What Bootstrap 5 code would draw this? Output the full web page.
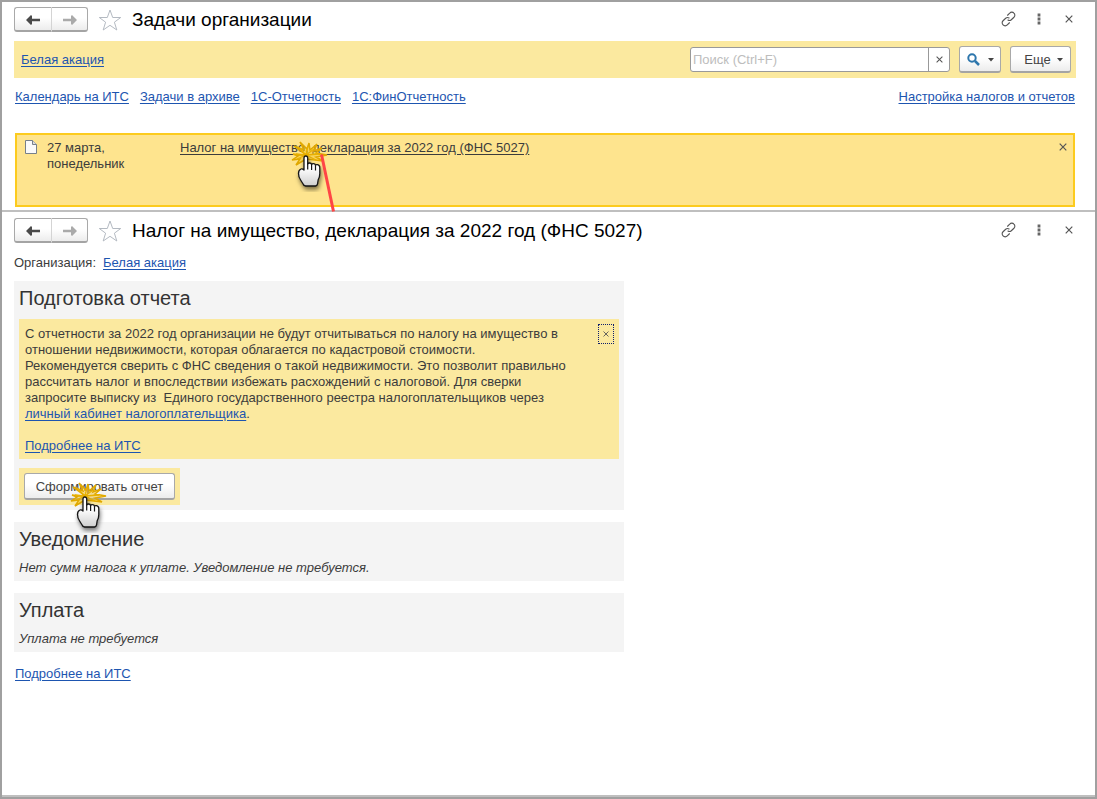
<!DOCTYPE html>
<html lang="ru">
<head>
<meta charset="utf-8">
<meta name="viewport" content="width=device-width, initial-scale=1">
<title>Задачи организации</title>
<link href="https://cdn.jsdelivr.net/npm/bootstrap@5.3.0/dist/css/bootstrap.min.css" rel="stylesheet">
<style>
  body { font: 13px/16px "Liberation Sans", Arial, sans-serif; color: #3c3c3c; background: #fff; }
  a { color: #1d55b0; text-underline-offset: 2px; }
  .window { min-height: 100vh; border: 2px solid #a0a0a0; }
  .pane { padding: 5px 19px 0 12px; }
  .pane-tasks { border-bottom: 2px solid #bfbfbf; padding-bottom: 3px; }
  .pane-report { border-bottom: 2px solid #bfbfbf; padding-top: 6px; }
  .pane-head { height: 25px; }
  .pane-title { font-size: 19px; line-height: 24px; color: #000; margin: 0 0 0 10px; }
  .star { margin-left: 10px; }
  .btn-1c { display: flex; align-items: center; justify-content: center; height: 27px; padding: 1px 0 0; font-size: 13px; line-height: 16px; color: #444;
    background: linear-gradient(#fff 45%, #ececec); border: 1px solid #a9a9a9; border-bottom: 2px solid #a4a4a4; border-radius: 3px; }
  .history .btn-1c { width: 38px; height: 25px; color: #4a4a4a; }
  .history .btn-1c:first-child { border-radius: 3px 0 0 3px; border-right-color: #d4d4d4; }
  .history .btn-1c:last-child { border-radius: 0 3px 3px 0; border-left: 0; width: 36px; color: #aaa; }
  .plain { border: 0; background: none; padding: 0; display: flex; align-items: center; justify-content: center; color: #555; }
  .tools { gap: 15px; margin-bottom: 2px; }
  .tools .plain { width: 15px; height: 16px; }
  .filter { height: 37px; background: #fbe99f; padding: 0 5px 0 7px; margin-top: 9px; }
  .search { width: 260px; height: 25px; margin-right: 9px; border: 1px solid #999; border-radius: 3px; background: #fff; }
  .search input { border: 0; outline: 0; min-width: 0; padding: 0 2px; background: none; }
  .search input::placeholder { color: #bdbdbd; opacity: 1; }
  .search .plain { width: 21px; border-left: 1px solid #999; }
  .btn-find { width: 42px; margin-right: 9px; gap: 8px; }
  .btn-more { width: 61px; gap: 6px; padding-left: 6px; }
  .shortcuts { margin: 11px 1px 0; gap: 11px; }
  .task { margin: 28px 1px 0; height: 74px; background: #fee48e; border: 2px solid #fccb1e; padding: 5px 5px 0 8px; }
  .task-date { width: 143px; padding-left: 10px; }
  .task a { color: #3c3c3c; }
  .task .plain { width: 11px; height: 14px; }
  .org { margin-top: 12px; gap: 7px; }
  .report { max-width: 610px; margin-top: 10px; }
  .block { background: #f4f4f4; padding: 5px; margin-bottom: 12px; }
  .block h2 { font-size: 20px; line-height: 24px; margin: 0; color: #333; }
  .note { background: #fbe99f; padding: 7px 6px 5px; margin: 9px 0; }
  .note p { max-width: 545px; margin: 0; }
  .note .plain { width: 16px; height: 20px; margin: -2px -1px 0 0; border: 1px dotted #10206c; }
  .hint { margin: 9px 0 0; font-style: italic; }
  .more { display: inline-block; margin: 2px 0 0 1px; }
  .accent { background: #fbe99f; padding: 5px; width: 161px; }
  .accent .btn-1c { width: 151px; }
  .pointer { position: absolute; pointer-events: none; z-index: 2; overflow: visible; }
  .pointer-task { left: 110px; top: 0; }
  .pointer-make { left: 50px; top: 13px; }
</style>
</head>
<body>
<svg width="0" height="0" class="position-absolute" aria-hidden="true">
  <defs>
    <linearGradient id="skin" x1="0" y1="0" x2="0" y2="1"><stop offset=".4" stop-color="#fff"/><stop offset="1" stop-color="#cfcfcf"/></linearGradient>
    <filter id="shade" x="-40%" y="-20%" width="190%" height="160%"><feDropShadow dx="1" dy="3" stdDeviation="2" flood-color="#000" flood-opacity=".5"/></filter>
    <symbol id="i-back" viewBox="0 0 14 10"><path d="M0 5l5-5 1 1v2.800h8v2.400H6V9l-1 1z" fill="currentColor"/></symbol>
    <symbol id="i-fwd" viewBox="0 0 14 10"><path d="M14 5L9 0 8 1v2.800H0v2.400h8V9l1 1z" fill="currentColor"/></symbol>
    <symbol id="i-star" viewBox="0 0 24 22"><path d="M12 1l2.700 7.500h8l-6.300 4.700 2.400 7.800L12 16.300 5.200 21l2.400-7.800L1.300 8.500h8z" fill="#fff" stroke="#b4bac2"/></symbol>
    <symbol id="i-link" viewBox="0 0 16 16"><g fill="none" stroke="#555" stroke-width="1.200" stroke-linecap="round"><path d="M7 4l2.300-2.300a3 3 0 0 1 4.500 0 3 3 0 0 1 0 4.400L11 8.800a3 3 0 0 1-3.600.3"/><path d="M9 12l-2.300 2.300a3 3 0 0 1-4.500 0 3 3 0 0 1 0-4.400L5 7.200a3 3 0 0 1 3.600-.3"/></g></symbol>
    <symbol id="i-dots" viewBox="0 0 4 12"><path d="M.6.600h2.800v2.800H.6zM.6 4.600h2.800v2.800H.6zM.6 8.600h2.800v2.800H.6z" fill="#666"/></symbol>
    <symbol id="i-x" viewBox="0 0 8 8"><path d="M.7.7l6.600 6.600M7.300.7L.7 7.300" stroke="currentColor" stroke-width="1.200"/></symbol>
    <symbol id="i-down" viewBox="0 0 6 4"><path d="M0 0h6L3 3.500z" fill="#444"/></symbol>
    <symbol id="i-hand" viewBox="0 -4 42 52">
      <path d="M16 11L4 2l10 4L10-2l7 7 2-6 1 7 7-6-3 7 8-3-6 5 11 2-11 2 7 4-8-1-9-1-10 6 4-6-8 1 6-4-5-2 8 1z" fill="#f5c01c" fill-opacity=".45" stroke="#e0a800" stroke-width="1.500" stroke-linejoin="miter"/>
      <path d="M16 11L8 3M16 11l2-9M16 11l8-6M16 11l14-1M16 11l10 5M16 11L7 15M16 11L6 10" stroke="#e8b000" stroke-width="1.300"/>
      <g filter="url(#shade)"><path d="M14 14q0-2 1.800-2t1.900 2v6q.4-1 2-1 1.600 0 1.900 1.500.5-1 2-.8 1.500.1 1.900 1.600.5-.9 2-.6 2.300.5 2.300 3v6q0 3-1.600 6l-.6 4q-.3 2-2 2.300h-10q-2-.1-2.500-2L10.600 36Q8.500 33 8.500 29.500q0-3.500 2.500-4.500 1.500-.5 3 1z" fill="url(#skin)" stroke="#151515" stroke-width="1.300" stroke-linejoin="round"/>
      <path d="M17.700 19v6.500M21.600 20.500v5.500M25.500 21.500v5" stroke="#151515" stroke-width="1.200" fill="none"/></g>
    </symbol>
  </defs>
</svg>

<div class="window d-flex flex-column">
  <section class="pane pane-tasks">
    <header class="pane-head d-flex align-items-center">
      <div class="history d-flex">
        <button class="btn-1c" type="button" aria-label="Назад"><svg width="14" height="10"><use href="#i-back"/></svg></button>
        <button class="btn-1c" type="button" aria-label="Вперед"><svg width="14" height="10"><use href="#i-fwd"/></svg></button>
      </div>
      <button class="plain star" type="button" aria-label="Избранное"><svg width="24" height="22"><use href="#i-star"/></svg></button>
      <h1 class="pane-title fw-normal flex-grow-1">Задачи организации</h1>
      <div class="tools d-flex">
        <button class="plain" type="button" aria-label="Ссылка"><svg width="16" height="16"><use href="#i-link"/></svg></button>
        <button class="plain" type="button" aria-label="Действия"><svg width="4" height="12"><use href="#i-dots"/></svg></button>
        <button class="plain" type="button" aria-label="Закрыть"><svg width="8" height="8"><use href="#i-x"/></svg></button>
      </div>
    </header>
    <div class="filter d-flex align-items-center">
      <a class="me-auto" href="#">Белая акация</a>
      <div class="search d-flex">
        <input class="flex-grow-1" type="text" aria-label="Поиск" placeholder="Поиск (Ctrl+F)">
        <button class="plain" type="button" aria-label="Очистить"><svg width="7" height="7"><use href="#i-x"/></svg></button>
      </div>
      <button class="btn-1c btn-find" type="button" aria-label="Найти">
        <svg width="13" height="13" viewBox="0 0 13 13"><circle cx="5" cy="5" r="3.700" fill="none" stroke="#2d76ac" stroke-width="2"/><path d="M8 8l4 4" stroke="#2d76ac" stroke-width="2.500"/></svg>
        <svg width="6" height="4"><use href="#i-down"/></svg>
      </button>
      <button class="btn-1c btn-more" type="button">Еще <svg width="6" height="4"><use href="#i-down"/></svg></button>
    </div>
    <nav class="shortcuts d-flex">
      <a href="#">Календарь на ИТС</a>
      <a href="#">Задачи в архиве</a>
      <a href="#">1С-Отчетность</a>
      <a href="#">1С:ФинОтчетность</a>
      <a class="ms-auto" href="#">Настройка налогов и отчетов</a>
    </nav>
    <article class="task d-flex align-items-start">
      <svg width="12" height="14" viewBox="0 0 12 14"><path d="M.5.500h7l4 4v9H.5z" fill="#fafafa" stroke="#77808a"/><path d="M7.500.5v4h4" fill="#ddd" stroke="#77808a"/></svg>
      <div class="task-date">27 марта,<br>понедельник</div>
      <div class="position-relative me-auto">
        <a href="#">Налог на имущество, декларация за 2022 год (ФНС 5027)</a>
        <svg class="pointer pointer-task" width="50" height="72" viewBox="0 0 50 72" aria-hidden="true"><svg width="42" height="52"><use href="#i-hand"/></svg><path d="M31.500 14.500L43.500 71.500" stroke="#ff4545" stroke-width="3"/></svg>
      </div>
      <button class="plain" type="button" aria-label="Скрыть"><svg width="8" height="8"><use href="#i-x"/></svg></button>
    </article>
  </section>

  <main class="pane pane-report flex-grow-1">
    <header class="pane-head d-flex align-items-center">
      <div class="history d-flex">
        <button class="btn-1c" type="button" aria-label="Назад"><svg width="14" height="10"><use href="#i-back"/></svg></button>
        <button class="btn-1c" type="button" aria-label="Вперед"><svg width="14" height="10"><use href="#i-fwd"/></svg></button>
      </div>
      <button class="plain star" type="button" aria-label="Избранное"><svg width="24" height="22"><use href="#i-star"/></svg></button>
      <h1 class="pane-title fw-normal flex-grow-1">Налог на имущество, декларация за 2022 год (ФНС 5027)</h1>
      <div class="tools d-flex">
        <button class="plain" type="button" aria-label="Ссылка"><svg width="16" height="16"><use href="#i-link"/></svg></button>
        <button class="plain" type="button" aria-label="Действия"><svg width="4" height="12"><use href="#i-dots"/></svg></button>
        <button class="plain" type="button" aria-label="Закрыть"><svg width="8" height="8"><use href="#i-x"/></svg></button>
      </div>
    </header>
    <div class="org d-flex"><span>Организация:</span><a href="#">Белая акация</a></div>
    <div class="report">
      <section class="block">
        <h2 class="fw-normal">Подготовка отчета</h2>
        <div class="note d-flex align-items-start justify-content-between">
          <div>
            <p>С отчетности за 2022 год организации не будут отчитываться по налогу на имущество в отношении недвижимости, которая облагается по кадастровой стоимости.</p>
            <p>Рекомендуется сверить с ФНС сведения о такой недвижимости. Это позволит правильно рассчитать налог и впоследствии избежать расхождений с налоговой. Для сверки запросите выписку из&nbsp; Единого государственного реестра налогоплательщиков через <a href="#">личный кабинет налогоплательщика</a>.</p>
            <p class="mt-3"><a href="#">Подробнее на ИТС</a></p>
          </div>
          <button class="plain" type="button" aria-label="Закрыть"><svg width="6" height="6"><use href="#i-x"/></svg></button>
        </div>
        <div class="accent position-relative">
          <button class="btn-1c" type="button">Сформировать отчет</button>
          <svg class="pointer pointer-make" width="42" height="52" aria-hidden="true"><use href="#i-hand"/></svg>
        </div>
      </section>
      <section class="block">
        <h2 class="fw-normal">Уведомление</h2>
        <p class="hint">Нет сумм налога к уплате. Уведомление не требуется.</p>
      </section>
      <section class="block">
        <h2 class="fw-normal">Уплата</h2>
        <p class="hint">Уплата не требуется</p>
      </section>
      <a class="more" href="#">Подробнее на ИТС</a>
    </div>
  </main>
</div>
<script src="https://cdn.jsdelivr.net/npm/bootstrap@5.3.0/dist/js/bootstrap.bundle.min.js"></script>
</body>
</html>
